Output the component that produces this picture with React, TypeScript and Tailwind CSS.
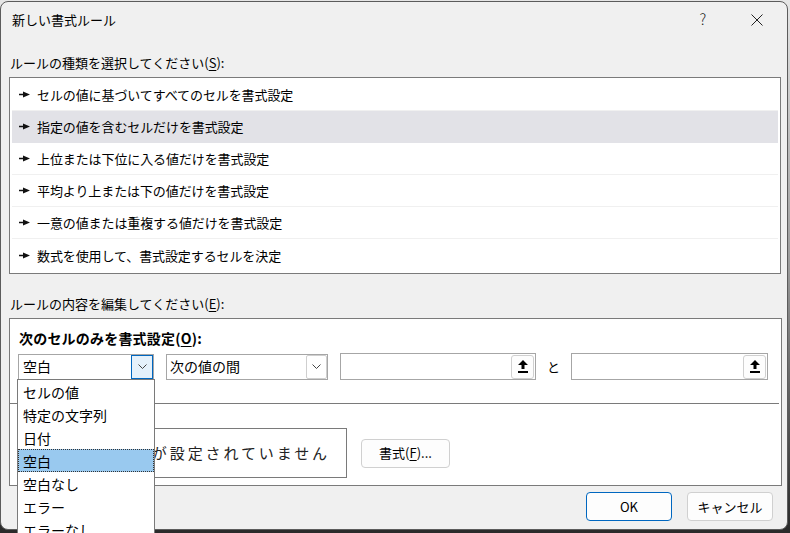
import React from "react";

const RULES = [
  "セルの値に基づいてすべてのセルを書式設定",
  "指定の値を含むセルだけを書式設定",
  "上位または下位に入る値だけを書式設定",
  "平均より上または下の値だけを書式設定",
  "一意の値または重複する値だけを書式設定",
  "数式を使用して、書式設定するセルを決定",
];

const OPTIONS = ["セルの値", "特定の文字列", "日付", "空白", "空白なし", "エラー", "エラーなし"];

const font = { fontFamily: '"Noto Sans CJK JP", "Noto Sans", sans-serif' };

const Pointer = () => (
  <svg width="11" height="7" viewBox="0 0 11 7" className="shrink-0">
    <polygon points="0,2.8 4,2.8 4,0.5 11,3.5 4,6.5 4,4.2 0,4.2" fill="#111" />
  </svg>
);

const Chevron = () => (
  <svg width="9" height="5" viewBox="0 0 9 5">
    <polyline points="0.5,0.5 4.5,4.5 8.5,0.5" fill="none" stroke="#444" strokeWidth="1" />
  </svg>
);

const Collapse = () => (
  <svg width="10" height="13" viewBox="0 0 10 13">
    <polygon points="5,0 10,5 6.5,5 6.5,9 3.5,9 3.5,5 0,5" fill="#000" />
    <rect x="0" y="11" width="10" height="2" fill="#000" />
  </svg>
);

const RefInput = ({ w }: { w: string }) => (
  <div className={`${w} h-[27px] border border-[#a6a6a6] bg-white flex items-center justify-end pr-[1px]`}>
    <div className="w-[23px] h-[24px] rounded-[3px] border border-[#d0d0d0] bg-[#fdfdfd] flex items-center justify-center">
      <Collapse />
    </div>
  </div>
);

export default function App() {
  return (
    <div className="relative w-[790px] h-[533px] overflow-hidden bg-linear-to-b from-[#e6e6e6] via-[#9a9a9a] to-[#2a2a2a]" style={font}>
      <div className="mt-[1px] w-[788px] h-[529px] rounded-[8px] border border-[#5c5c5c] bg-[#f0f0f0] flex flex-col text-[13px] text-black">
        {/* title bar */}
        <div className="h-[35px] flex items-center justify-between pl-[11px]">
          <span className="text-[13px]">新しい書式ルール</span>
          <div className="flex items-center">
            <span className="w-[46px] text-center text-[15px] font-light text-[#222]">?</span>
            <span className="w-[61px] flex justify-center">
              <svg width="12" height="12" viewBox="0 0 12 12">
                <path d="M0.5 0.5 L11.5 11.5 M11.5 0.5 L0.5 11.5" stroke="#222" strokeWidth="1" />
              </svg>
            </span>
          </div>
        </div>

        <div className="px-[8px] flex flex-col">
          <div className="mt-[16px] h-[20px] leading-[20px] pl-[1px]">
            ルールの種類を選択してください(<span className="underline underline-offset-2">S</span>):
          </div>

          <div className="mt-[4px] w-[772px] h-[197px] border border-[#7a7a7a] bg-white pt-[1px] px-[2px] flex flex-col">
            {RULES.map((r, i) => (
              <div
                key={r}
                className={`h-[32px] shrink-0 flex items-center gap-[7px] pl-[7px] border-b ${
                  i === 1 ? "bg-[#e2e2e7] border-[#e2e2e7]" : "border-[#f0f0f0]"
                } ${i === RULES.length - 1 ? "border-b-0" : ""}`}
              >
                <Pointer />
                <span className="text-[13px] tracking-[-0.1px] pt-[1px]">{r}</span>
              </div>
            ))}
          </div>

          <div className="mt-[20px] h-[20px] leading-[20px] pl-[1px]">
            ルールの内容を編集してください(<span className="underline underline-offset-2">E</span>):
          </div>

          <div className="mt-[4px] w-[773px] h-[168px] border border-[#7a7a7a] bg-white flex flex-col">
            <div className="mt-[9px] h-[20px] leading-[20px] pl-[9px] font-bold text-[14px] tracking-[0.2px]">
              次のセルのみを書式設定(<span className="underline underline-offset-2">O</span>):
            </div>

            <div className="mt-[5px] pl-[8px] flex items-center">
              <div className="w-[136px] h-[26px] border border-[#a6a6a6] bg-white flex items-center justify-between pl-[4px]">
                <span className="text-[14px]">空白</span>
                <div className="w-[22px] h-[24px] border border-[#0067c0] bg-[#e5f1fb] flex items-center justify-center">
                  <Chevron />
                </div>
              </div>
              <div className="ml-[12px] w-[162px] h-[26px] border border-[#a6a6a6] bg-white flex items-center justify-between pl-[3px]">
                <span className="text-[14px]">次の値の間</span>
                <div className="w-[21px] h-[24px] border border-[#cfcfcf] rounded-[2px] bg-white flex items-center justify-center">
                  <Chevron />
                </div>
              </div>
              <div className="ml-[12px]">
                <RefInput w="w-[196px]" />
              </div>
              <span className="w-[35px] text-center text-[13px]">と</span>
              <RefInput w="w-[197px]" />
            </div>

            <div className="mt-[23px] h-[1px] w-[769px] bg-[#7a7a7a]" />

            <div className="mt-[24px] flex items-center">
              {/* the preview label sits under the open list */}
              <div className="w-[89px]" />
              <div className="w-[248px] h-[50px] border border-[#7a7a7a] bg-white flex items-center justify-center">
                <span className="text-[15px] tracking-[2.9px] text-[#222]">書式が設定されていません</span>
              </div>
              <button className="ml-[14px] w-[89px] h-[29px] rounded-[4px] border border-[#d0d0d0] bg-[#fdfdfd] text-[13px]">
                書式(<span className="underline underline-offset-2">F</span>)...
              </button>
            </div>
          </div>

          <div className="mt-[6px] flex justify-end gap-[15px] pr-[6px]">
            <button className="w-[86px] h-[29px] rounded-[4px] border border-[#0067c0] bg-[#fdfdfd] text-[13px]">OK</button>
            <button className="w-[86px] h-[29px] rounded-[4px] border border-[#d0d0d0] bg-[#fdfdfd] text-[13px]">キャンセル</button>
          </div>
        </div>
      </div>

      {/* open dropdown list */}
      <div className="absolute left-[17px] top-[379px] w-[138px] h-[170px] border border-[#7a7a7a] bg-white flex flex-col">
        {OPTIONS.map((o) => (
          <div
            key={o}
            className={`h-[23px] shrink-0 leading-[23px] pl-[4px] text-[14px] border ${
              o === "空白" ? "bg-[#99c9ef] border-dotted border-[#333]" : "border-transparent"
            }`}
          >
            {o}
          </div>
        ))}
      </div>
    </div>
  );
}
